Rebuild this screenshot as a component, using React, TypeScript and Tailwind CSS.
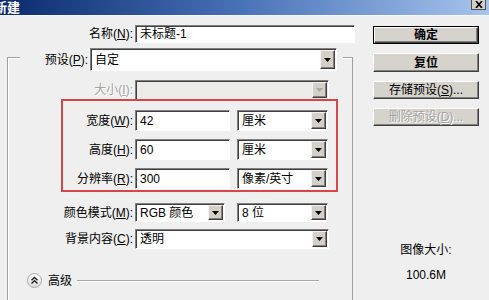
import React from "react";

const sunken =
  "border border-t-[#808080] border-l-[#808080] border-b-white border-r-white shadow-[inset_1px_1px_0_#404040]";

function Arrow({ disabled }: { disabled?: boolean }) {
  return (
    <div className="w-[15px] my-[1px] mr-[1px] bg-[#d4d0c8] border border-t-[#f4f3ef] border-l-[#f4f3ef] border-b-[#404040] border-r-[#404040] shadow-[inset_-1px_-1px_0_#808080] flex items-center justify-center">
      <svg width="7" height="4" viewBox="0 0 7 4">
        <path d="M0 0H7L3.5 4Z" fill={disabled ? "#a8a8a8" : "#000"} />
      </svg>
    </div>
  );
}

function Select({
  className,
  value,
  disabled,
}: {
  className: string;
  value?: string;
  disabled?: boolean;
}) {
  return (
    <div
      className={`flex items-stretch ${disabled ? "bg-[#ecebe8]" : "bg-white"} ${sunken} ${className}`}
    >
      <div className="flex-1 flex items-center pl-[4px] leading-none whitespace-nowrap">
        {value}
      </div>
      <Arrow disabled={disabled} />
    </div>
  );
}

function Input({ className, value }: { className: string; value: string }) {
  return (
    <div
      className={`flex items-center bg-white pl-[4px] leading-none whitespace-nowrap ${sunken} ${className}`}
    >
      {value}
    </div>
  );
}

function Label({
  className,
  text,
  k,
  tail = "):",
  disabled,
}: {
  className: string;
  text: string;
  k: string;
  tail?: string;
  disabled?: boolean;
}) {
  return (
    <div
      className={`text-right whitespace-nowrap leading-none ${
        disabled ? "text-[#a3a3a3] [text-shadow:1px_1px_0_#fff]" : "text-black"
      } ${className}`}
    >
      {text}(<u>{k}</u>
      {tail}
    </div>
  );
}

function Btn({
  className,
  children,
  def,
  disabled,
}: {
  className: string;
  children: React.ReactNode;
  def?: boolean;
  disabled?: boolean;
}) {
  return (
    <div
      className={`w-[106px] flex ${def ? "border border-black" : ""} ${className}`}
    >
      <div
        className={`flex-1 bg-[#d6d3cc] border border-t-white border-l-white border-b-[#404040] border-r-[#404040] shadow-[inset_-1px_-1px_0_#808080] flex items-center justify-center leading-none whitespace-nowrap ${
          disabled ? "text-[#a3a3a3] [text-shadow:1px_1px_0_#fff]" : "text-black"
        }`}
      >
        {children}
      </div>
    </div>
  );
}

export default function App() {
  return (
    <div className="w-[489px] h-[300px] overflow-hidden bg-[#efefef] flex flex-col text-[12px] text-black font-['Liberation_Sans','Noto_Sans_CJK_SC',sans-serif]">
      {/* Title bar */}
      <div className="h-[15px] shrink-0 flex items-start bg-linear-to-r from-[#0c2a6e] via-[#4a74b8] to-[#a8c4ec]">
        <div className="-ml-[6px] text-white font-bold text-[13px] leading-[14px] font-['Noto_Sans_CJK_SC',sans-serif]">
          新建
        </div>
        <div className="ml-auto mr-[3px] w-[15px] h-[10px] bg-[#d4d0c8] border border-t-0 border-[#505050] flex items-center justify-center">
          <svg width="8" height="7" viewBox="0 0 8 7">
            <path d="M1 0L7 7M7 0L1 7" stroke="#000" strokeWidth="1.6" />
          </svg>
        </div>
      </div>
      <div className="h-px bg-[#f8f8f8] shrink-0" />

      {/* Body */}
      <div className="flex flex-1 min-h-0">
        {/* Left */}
        <div className="w-[360px] flex flex-col">
          <div className="mt-[9px] h-[18px] flex items-center">
            <Label className="w-[133px]" text="名称" k="N" />
            <Input className="ml-[2px] w-[220px] h-[18px]" value="未标题-1" />
          </div>

          <div className="mt-[14px] ml-[7px] w-[346px] flex-1 flex flex-col border-l border-t border-r border-[#a0a0a0] shadow-[inset_1px_1px_0_#fff]">
            {/* legend */}
            <div className="-mt-[10px] ml-[12px] w-[323px] h-[23px] flex items-center bg-[#efefef] relative">
              <Label className="w-[68px]" text="预设" k="P" />
              <Select className="ml-[2px] w-[247px] h-[23px]" value="自定" />
            </div>

            <div className="mt-[9px] h-[20px] flex items-center">
              <Label className="w-[125px]" text="大小" k="I" disabled />
              <Select className="ml-[2px] w-[194px] h-[20px]" disabled />
            </div>

            <div className="-mt-[1px] ml-[53px] w-[277px] border-2 border-[#d4484c] pt-[9px] pb-[1px] flex flex-col gap-[8px] relative">
              <div className="h-[21px] flex items-center">
                <Label className="w-[70px]" text="宽度" k="W" />
                <Input className="ml-[2px] w-[95px] h-[21px]" value="42" />
                <Select className="ml-[7px] w-[91px] h-[21px]" value="厘米" />
              </div>
              <div className="h-[21px] flex items-center">
                <Label className="w-[70px]" text="高度" k="H" />
                <Input className="ml-[2px] w-[95px] h-[21px]" value="60" />
                <Select className="ml-[7px] w-[91px] h-[21px]" value="厘米" />
              </div>
              <div className="h-[21px] flex items-center">
                <Label className="w-[70px]" text="分辨率" k="R" />
                <Input className="ml-[2px] w-[95px] h-[21px]" value="300" />
                <Select className="ml-[7px] w-[91px] h-[21px]" value="像素/英寸" />
              </div>
            </div>

            <div className="mt-[11px] h-[19px] flex items-center">
              <Label className="w-[125px]" text="颜色模式" k="M" />
              <Select className="ml-[2px] w-[90px] h-[19px]" value="RGB 颜色" />
              <Select className="ml-[12px] w-[91px] h-[19px]" value="8 位" />
            </div>

            <div className="mt-[7px] h-[20px] flex items-center">
              <Label className="w-[125px]" text="背景内容" k="C" />
              <Select className="ml-[2px] w-[194px] h-[20px]" value="透明" />
            </div>

            <div className="mt-[24px] h-[15px] flex items-center">
              <div className="ml-[19px] w-[15px] h-[15px] rounded-full border border-[#a8a8a8] bg-linear-to-b from-white to-[#dcdcdc] flex items-center justify-center">
                <svg width="9" height="9" viewBox="0 0 9 9">
                  <path
                    d="M1.5 4.2L4.5 1.5L7.5 4.2M1.5 7.5L4.5 4.8L7.5 7.5"
                    stroke="#222"
                    strokeWidth="1.4"
                    fill="none"
                  />
                </svg>
              </div>
              <div className="ml-[6px] leading-none">高级</div>
              <div className="ml-[5px] w-[242px] h-[2px] border-t border-[#a8a8a8] border-b border-b-white" />
            </div>
          </div>
        </div>

        {/* Right */}
        <div className="w-[129px] flex flex-col pl-[13px] pt-[10px]">
          <Btn className="h-[18px]" def>
            <span className="font-bold">确定</span>
          </Btn>
          <Btn className="mt-[9px] h-[19px]">
            <span className="font-bold">复位</span>
          </Btn>
          <Btn className="mt-[9px] h-[18px]">
            存储预设(<u>S</u>)...
          </Btn>
          <Btn className="mt-[9px] h-[18px]" disabled>
            删除预设(<u>D</u>)...
          </Btn>
          <div className="mt-[117px] w-[106px] text-center leading-[14px]">图像大小:</div>
          <div className="mt-[11px] w-[106px] text-center leading-[14px]">100.6M</div>
        </div>
      </div>
    </div>
  );
}
